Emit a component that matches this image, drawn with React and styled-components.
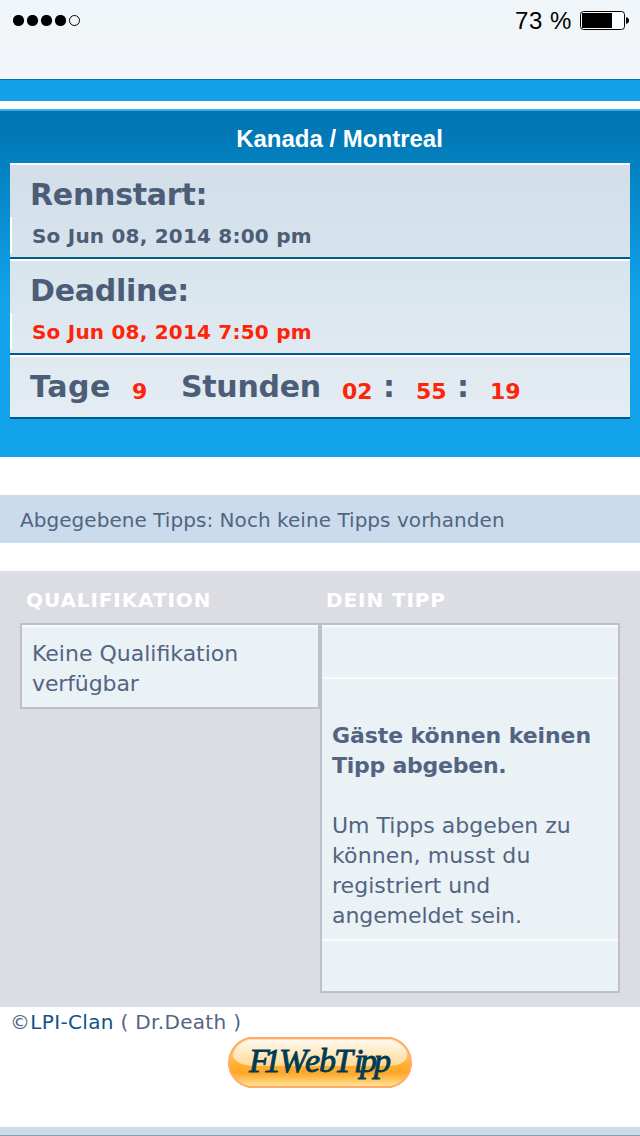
import React from "react";
import styled, { createGlobalStyle } from "styled-components";

const GlobalStyle = createGlobalStyle`
  * { box-sizing: border-box; }
  body {
    margin: 0;
    background: #fff;
    font-family: "DejaVu Sans", Verdana, sans-serif;
    color: #536482;
  }
`;

const Screen = styled.div`
  width: 640px;
  height: 1136px;
  overflow: hidden;
  display: flex;
  flex-direction: column;
  background: #fff;
`;

const StatusBar = styled.header`
  height: 80px;
  flex: none;
  display: flex;
  align-items: flex-start;
  justify-content: space-between;
  padding: 7px 10px 0 13px;
  background: linear-gradient(#f0f6f9, #f2f5f9);
  border-bottom: 1px solid #0f6fa8;
`;

const Signal = styled.svg`
  display: block;
  margin-top: 8px;
`;

const Power = styled.div`
  display: flex;
  align-items: flex-start;
  gap: 8px;
`;

const Battery = styled.svg`
  display: block;
  margin-top: 3px;
`;

const Percent = styled.span`
  font: 24px/28px "Liberation Sans", Arial, sans-serif;
  letter-spacing: 0.55px;
  color: #000;
`;

const BlueStrip = styled.div`
  height: 21px;
  flex: none;
  background: #12a0e9;
`;

const RacePanel = styled.section`
  height: 348px;
  flex: none;
  margin-top: 8px;
  padding: 0 10px;
  border-top: 2px solid #3cb0e6;
  background: linear-gradient(#0076b1 0, #0279b6 25px, #0483c3 60px, #12a3eb 190px, #12a3eb 100%);
`;

const RaceTitle = styled.h1`
  margin: 0;
  height: 52px;
  padding: 13px 0 0 39px;
  text-align: center;
  font: bold 24px/30px "Liberation Sans", Arial, sans-serif;
  color: #fff;
`;

const RaceTable = styled.div`
  background: linear-gradient(#d2dfe9, #d5e1eb 60px, #dae6ee 120px, #e5ecf3);
`;

const RaceRow = styled.div`
  height: ${(p) => p.$height}px;
  border-top: 2px solid #fff;
  border-bottom: 2px solid #005b8d;
`;

const Term = styled.div`
  height: 52px;
  padding: 10px 0 0 20px;
  font-weight: bold;
  font-size: 30px;
  line-height: 40px;
  letter-spacing: -0.25px;
  color: #4c5d77;
`;

const Moment = styled.div`
  height: 36px;
  padding-left: 20px;
  border-left: 2px solid #fff;
  font-weight: bold;
  font-size: 20px;
  line-height: 39px;
  letter-spacing: 0.21px;
  color: ${(p) => (p.$alert ? "#ff230a" : "#4c5d77")};
`;

const Countdown = styled.div`
  display: flex;
  align-items: baseline;
  padding: 10px 0 0 20px;
  font-weight: bold;
  font-size: 30px;
  line-height: 40px;
  color: #4c5d77;
`;

const Unit = styled.span`
  width: ${(p) => p.$width}px;
  letter-spacing: ${(p) => p.$track || 0}px;
  white-space: nowrap;
`;

const Count = styled.span`
  width: ${(p) => p.$width}px;
  font-size: 22px;
  color: #ff230a;
  position: relative;
  top: 2px;
`;

const TipsBar = styled.div`
  height: 48px;
  flex: none;
  margin-top: 38px;
  padding-left: 20px;
  font-size: 20px;
  line-height: 51px;
  letter-spacing: 0.045px;
  background: #cadceb;
`;

const Board = styled.section`
  height: 436px;
  flex: none;
  margin-top: 28px;
  padding: 0 20px;
  display: flex;
  align-items: flex-start;
  background: #dcdde2;
`;

const Column = styled.div`
  width: 300px;
`;

const Heading = styled.h2`
  margin: 0;
  height: 52px;
  padding-left: 6px;
  font-size: 20px;
  line-height: 59px;
  letter-spacing: 0.9px;
  color: #fff;
`;

const Box = styled.div`
  border: 2px solid #bec0d0;
  background: #eaf2f6;
`;

const Cell = styled.div`
  height: ${(p) => p.$height}px;
  padding: ${(p) => p.$top || 0}px 10px 0;
  border-top: 2px solid #fafbfd;
  font-size: 22px;
  line-height: 30px;
`;

const Line = styled.div`
  height: 30px;
  white-space: nowrap;
  font-weight: ${(p) => (p.$bold ? "bold" : "normal")};
  letter-spacing: ${(p) => p.$track || 0}px;
`;

const Footer = styled.footer`
  height: 120px;
  flex: none;
`;

const Credit = styled.div`
  height: 29px;
  padding-left: 10px;
  font-size: 20px;
  line-height: 30px;
  letter-spacing: 0.33px;
`;

const Link = styled.a`
  color: #105289;
`;

const Logo = styled.svg`
  display: block;
  margin: 0 auto;
`;

const BottomStrip = styled.div`
  height: 9px;
  flex: none;
  background: #cadceb;
  border-bottom: 1px solid #8c9cb0;
`;

export default function App() {
  return (
    <Screen>
      <GlobalStyle />
      <StatusBar>
        <Signal width="68" height="12" viewBox="0 0 68 12">
          {[5.5, 19.5, 33.5, 47.5].map((x) => (
            <circle key={x} cx={x} cy="5.5" r="5.6" />
          ))}
          <circle cx="61.5" cy="5.5" r="5" fill="none" stroke="#000" />
        </Signal>
        <Power>
          <Percent>73 %</Percent>
          <Battery width="50" height="20" viewBox="0 0 50 20">
            <rect x="0.5" y="1.5" width="44" height="18" rx="3" fill="#fafcfd" stroke="#000" />
            <rect x="2" y="3" width="30" height="15" />
            <path d="M46 7.2q3 .4 3 3.3t-3 3.3z" />
          </Battery>
        </Power>
      </StatusBar>
      <BlueStrip />
      <RacePanel>
        <RaceTitle>Kanada / Montreal</RaceTitle>
        <RaceTable>
          <RaceRow $height={96}>
            <Term>Rennstart:</Term>
            <Moment>So Jun 08, 2014 8:00 pm</Moment>
          </RaceRow>
          <RaceRow $height={96}>
            <Term>Deadline:</Term>
            <Moment $alert>So Jun 08, 2014 7:50 pm</Moment>
          </RaceRow>
          <RaceRow $height={64}>
            <Countdown>
              <Unit $width={102} $track={0.6}>Tage</Unit>
              <Count $width={49}>9</Count>
              <Unit $width={161} $track={-0.3}>Stunden</Unit>
              <Count $width={41}>02</Count>
              <Unit $width={33}>:</Unit>
              <Count $width={41}>55</Count>
              <Unit $width={33}>:</Unit>
              <Count $width={41}>19</Count>
            </Countdown>
          </RaceRow>
        </RaceTable>
      </RacePanel>
      <TipsBar>Abgegebene Tipps: Noch keine Tipps vorhanden</TipsBar>
      <Board>
        <Column>
          <Heading>QUALIFIKATION</Heading>
          <Box>
            <Cell $height={82} $top={12}>
              <Line>Keine Qualifikation</Line>
              <Line $track={-0.12}>verfügbar</Line>
            </Cell>
          </Box>
        </Column>
        <Column>
          <Heading>DEIN TIPP</Heading>
          <Box>
            <Cell $height={52} />
            <Cell $height={262} $top={42}>
              <Line $bold $track={-0.08}>Gäste können keinen</Line>
              <Line $bold $track={-0.25}>Tipp abgeben.</Line>
              <Line />
              <Line>Um Tipps abgeben zu</Line>
              <Line $track={0.12}>können, musst du</Line>
              <Line $track={0.05}>registriert und</Line>
              <Line $track={-0.08}>angemeldet sein.</Line>
            </Cell>
            <Cell $height={52} />
          </Box>
        </Column>
      </Board>
      <Footer>
        <Credit>
          ©<Link>LPI-Clan</Link> ( Dr.Death )
        </Credit>
        <Logo width="186" height="54" viewBox="0 0 186 54">
          <defs>
            <linearGradient id="pill" x1="0" y1="0" x2="0" y2="1">
              <stop offset="0" stopColor="#ffe6bd" />
              <stop offset=".55" stopColor="#ffae32" />
              <stop offset=".72" stopColor="#ffa827" />
              <stop offset="1" stopColor="#ffe7a0" />
            </linearGradient>
            <linearGradient id="gloss" x1="0" y1="0" x2="0" y2="1">
              <stop offset="0" stopColor="#fffaf0" />
              <stop offset="1" stopColor="#ffd994" />
            </linearGradient>
          </defs>
          <path
            d="M22 2H164C176 5 184 15 184 27S176 48 164 51H22C10 48 2 39 2 27S10 5 22 2Z"
            fill="url(#pill)"
            stroke="#ffac68"
            strokeWidth="2"
          />
          <path
            d="M23 4H163C173 6 180 12 180 19C180 27 170 30 160 30H27C17 30 7 26 6 20C7 12 13 6 23 4Z"
            fill="url(#gloss)"
          />
          <text
            x="22 37 52 78 92 107 127 133 147"
            y="36"
            fill="#003b55"
            stroke="#003b55"
            strokeWidth=".9"
            fontFamily="Liberation Serif, serif"
            fontStyle="italic"
            fontSize="34"
          >
            F1WebTipp
          </text>
        </Logo>
      </Footer>
      <BottomStrip />
    </Screen>
  );
}
